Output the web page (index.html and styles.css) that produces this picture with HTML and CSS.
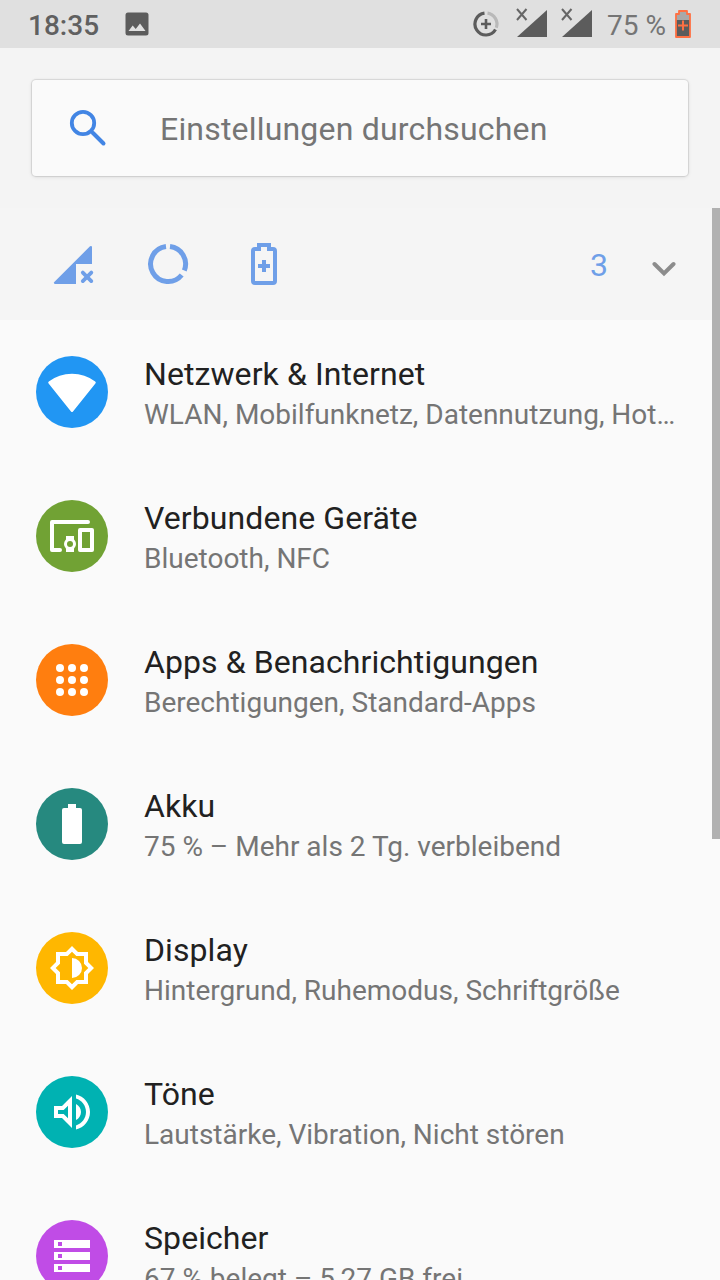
FILE: index.html
```html
<!DOCTYPE html>
<html lang="de">

<head>
    <meta charset="UTF-8">
    <meta name="viewport" content="width=device-width, initial-scale=1.0">
    <title>Einstellungen</title>
    <link rel="stylesheet" href="styles.css">
</head>

<body>

    <div class="status-bar">
        <span class="clock">18:35</span>
        <svg class="status-image" width="24" height="24" viewBox="0 0 24 24">
            <rect x="0.5" y="0.5" width="23" height="23" rx="2.5" fill="#5c5c5c"/>
            <path d="M3.5 19l4.2-5.5 3 3.6L15 11.500l5.500 7.500z" fill="#e0e0e0"/>
        </svg>
        <div class="status-icons">
            <svg width="28" height="28" viewBox="0 0 28 28" fill="none">
                <path d="M12.500 3.100A11 11 0 1 0 23.500 19.500" stroke="#5c5c5c" stroke-width="3.200"/>
                <path d="M15.500 3.100A11 11 0 0 1 24.300 17.700" stroke="#b9b9b9" stroke-width="3.200"/>
                <path d="M14 9v10M9 14h10" stroke="#5c5c5c" stroke-width="2.600"/>
            </svg>
            <svg class="sim" width="32" height="30" viewBox="0 0 32 30">
                <path d="M31 2v27H1z" fill="#5c5c5c"/>
                <path d="M1 1l9.500 11M10.500 1L1 12" stroke="#666" stroke-width="2"/>
            </svg>
            <svg class="sim" width="32" height="30" viewBox="0 0 32 30">
                <path d="M31 2v27H1z" fill="#5c5c5c"/>
                <path d="M1 1l9.500 11M10.500 1L1 12" stroke="#666" stroke-width="2"/>
            </svg>
            <span class="percent">75 %</span>
            <svg class="status-battery" width="16" height="28" viewBox="0 0 16 28">
                <path d="M1 4h3V1h8v3h3v23H1z" fill="#a8a8a8"/>
                <path d="M1 10h14v17H1z" fill="#5c5c5c"/>
                <path d="M1 4h3V1h8v3h3v23H1z" fill="none" stroke="#ff7043" stroke-width="1.800" stroke-linejoin="round"/>
                <path d="M8 10.500v10M3 15.500h10" stroke="#ff7043" stroke-width="2"/>
            </svg>
        </div>
    </div>

    <div class="search-area">
        <div class="search-box">
            <svg width="38" height="38" viewBox="0 0 38 38" fill="none" stroke="#4285e4">
                <circle cx="14" cy="14" r="11.200" stroke-width="3.800"/>
                <path d="M24 24l10.500 10.500" stroke-width="4" stroke-linecap="round"/>
                <path d="M22 22l3 3" stroke-width="3"/>
            </svg>
            <span class="search-text">Einstellungen durchsuchen</span>
        </div>
    </div>

    <div class="suggestions">
        <svg width="46" height="48" viewBox="0 0 46 48" fill="#6f9fe8">
            <path d="M5 44q-2-.5-.7-2L40 6.300q1.800-1 2 .7v17H26v20z"/>
            <path d="M32.800 32.600l8.500 8.500M41.300 32.600l-8.500 8.500" stroke="#6f9fe8" stroke-width="3.800" stroke-linecap="round"/>
        </svg>
        <svg width="48" height="48" viewBox="0 0 48 48" fill="none" stroke="#6f9fe8" stroke-width="5">
            <path d="M22 6.600A17.500 17.500 0 1 0 37.700 35"/>
            <path d="M26 6.600A17.500 17.500 0 0 1 40.300 30.500"/>
        </svg>
        <svg width="48" height="48" viewBox="0 0 48 48" fill="none" stroke="#6f9fe8" stroke-width="4">
            <path d="M19 9H15q-2 0-2 2V41q0 2 2 2H33q2 0 2-2V11q0-2-2-2H29V5H19z"/>
            <path d="M24 20v12M18 26h12"/>
        </svg>
        <span class="count">3</span>
        <svg class="chevron" width="24" height="16" viewBox="0 0 24 16">
            <path d="M2.500 3l9.500 9.500L21.500 3" fill="none" stroke="#8c8c8c" stroke-width="4" stroke-linecap="round"/>
        </svg>
    </div>

    <div class="list">
        <div class="item">
            <svg class="icon network" viewBox="0 0 72 72">
                <path d="M12.600 27.500q-1-1 .2-2Q23 17.700 36 17.700t23.200 7.800q1.200 1 .2 2L37 55.400q-1 1.200-2 0z"/>
            </svg>
            <div class="text">
                <div class="title">Netzwerk &amp; Internet</div>
                <div class="summary">WLAN, Mobilfunknetz, Datennutzung, Hot…</div>
            </div>
        </div>
        <div class="item">
            <svg class="icon devices" viewBox="0 0 72 72">
                <path d="M52 22H16v28h8" fill="none" stroke="#fff" stroke-width="4" stroke-linecap="round" stroke-linejoin="round"/>
                <rect x="44" y="30" width="12" height="20" fill="none" stroke="#fff" stroke-width="4" stroke-linejoin="round"/>
                <path d="M30 36h8v16h-8z"/>
                <circle cx="34" cy="44" r="6"/>
                <circle cx="34" cy="44" r="3" fill="#71a234"/>
            </svg>
            <div class="text">
                <div class="title">Verbundene Geräte</div>
                <div class="summary">Bluetooth, NFC</div>
            </div>
        </div>
        <div class="item">
            <svg class="icon apps" viewBox="0 0 72 72">
                <circle cx="24" cy="24" r="4"/>
                <circle cx="36" cy="24" r="4"/>
                <circle cx="48" cy="24" r="4"/>
                <circle cx="24" cy="36" r="4"/>
                <circle cx="36" cy="36" r="4"/>
                <circle cx="48" cy="36" r="4"/>
                <circle cx="24" cy="48" r="4"/>
                <circle cx="36" cy="48" r="4"/>
                <circle cx="48" cy="48" r="4"/>
            </svg>
            <div class="text">
                <div class="title">Apps &amp; Benachrichtigungen</div>
                <div class="summary">Berechtigungen, Standard-Apps</div>
            </div>
        </div>
        <div class="item">
            <svg class="icon battery" viewBox="0 0 72 72">
                <rect x="26" y="20" width="20" height="36" rx="2"/>
                <rect x="32" y="16" width="8" height="6"/>
            </svg>
            <div class="text">
                <div class="title">Akku</div>
                <div class="summary">75 % – Mehr als 2 Tg. verbleibend</div>
            </div>
        </div>
        <div class="item">
            <svg class="icon display" viewBox="0 0 72 72">
                <path fill-rule="evenodd" d="M36 14l6 6h10v10l6 6-6 6v10H42l-6 6-6-6H20V42l-6-6 6-6V20h10zM36 19.660L31.660 24H24v7.660L19.660 36 24 40.340V48h7.660L36 52.340 40.340 48H48v-7.660L52.340 36 48 31.660V24h-7.660z"/>
                <path d="M36 26a10 10 0 0 1 0 20z"/>
            </svg>
            <div class="text">
                <div class="title">Display</div>
                <div class="summary">Hintergrund, Ruhemodus, Schriftgröße</div>
            </div>
        </div>
        <div class="item">
            <svg class="icon sound" viewBox="-6 -6 36 36">
                <path fill-rule="evenodd" d="M3 9v6h4l5 5V4L7 9H3zm7-.17v6.340L7.830 13H5v-2h2.830L10 8.830zM16.500 12c0-1.770-1.020-3.290-2.500-4.030v8.050c1.480-.73 2.500-2.250 2.500-4.020zM14 3.230v2.060c2.890.86 5 3.540 5 6.710s-2.110 5.850-5 6.710v2.060c4.010-.91 7-4.490 7-8.770s-2.990-7.860-7-8.770z"/>
            </svg>
            <div class="text">
                <div class="title">Töne</div>
                <div class="summary">Lautstärke, Vibration, Nicht stören</div>
            </div>
        </div>
        <div class="item">
            <svg class="icon storage" viewBox="0 0 72 72">
                <path fill-rule="evenodd" d="M18 20h36v8H18zM22 22h4v4h-4zM18 32h36v8H18zM22 34h4v4h-4zM18 44h36v8H18zM22 46h4v4h-4z"/>
            </svg>
            <div class="text">
                <div class="title">Speicher</div>
                <div class="summary">67 % belegt – 5,27 GB frei</div>
            </div>
        </div>
    </div>

    <div class="scrollbar"></div>

</body>

</html>
```
FILE: styles.css
```css
* {
    box-sizing: border-box;
}

body {
    margin: 0;
    width: 720px;
    height: 1280px;
    overflow: hidden;
    position: relative;
    background-color: #fafafa;
    font-family: Roboto, "Noto Sans", sans-serif;
}

svg {
    display: block;
    flex-shrink: 0;
}

/* Status bar */
.status-bar {
    display: flex;
    align-items: center;
    height: 48px;
    padding: 0 29px 0 28px;
    background-color: #e0e0e0;
    color: #606060;
}

.clock {
    width: 97px;
    padding-top: 3px;
    font-size: 28px;
    font-weight: 500;
}

.status-icons {
    display: flex;
    align-items: center;
    margin-left: auto;
}

.sim {
    margin-left: 16px;
    margin-top: -2px;
}

.sim + .sim {
    margin-left: 13px;
}

.percent {
    width: 60px;
    margin-left: 14px;
    padding-top: 3px;
    font-size: 28px;
    color: #757575;
    white-space: nowrap;
}

.status-battery {
    margin-left: 8px;
}

/* Search */
.search-area {
    height: 160px;
    padding: 32px 32px 0;
    background-color: #f4f4f4;
}

.search-box {
    display: flex;
    align-items: center;
    height: 96px;
    padding-left: 37px;
    background-color: #fafafa;
    border-radius: 4px;
    box-shadow: 0 0 1px 1px rgba(0, 0, 0, 0.1), 0 1px 4px rgba(0, 0, 0, 0.1);
}

.search-text {
    margin-left: 53px;
    padding-top: 2px;
    font-size: 32px;
    letter-spacing: 0.19px;
    color: #757575;
}

/* Suggestions */
.suggestions {
    display: flex;
    align-items: center;
    gap: 48px;
    height: 112px;
    padding: 0 44px 0 50px;
    background-color: #f5f5f5;
}

.count {
    margin-left: auto;
    padding-top: 2px;
    font-size: 32px;
    color: #6f9fe8;
}

.chevron {
    margin-left: -4px;
    margin-top: 9px;
}

/* Settings list */
.item {
    display: flex;
    align-items: center;
    height: 144px;
    padding: 0 36px;
}

.icon {
    width: 72px;
    height: 72px;
    border-radius: 50%;
    fill: #fff;
}

.network {
    background-color: #2196f3;
}

.devices {
    background-color: #71a234;
}

.apps {
    background-color: #ff7e0f;
}

.battery {
    background-color: #26897f;
}

.display {
    background-color: #ffb700;
}

.sound {
    background-color: #00b2b2;
}

.storage {
    background-color: #c04ce6;
}

.text {
    width: 540px;
    margin-left: 36px;
    padding-top: 3px;
}

.title {
    font-size: 32px;
    line-height: 42px;
    letter-spacing: 0.08px;
    color: #212121;
}

.summary {
    font-size: 28px;
    line-height: 39px;
    color: #757575;
    white-space: nowrap;
}

.scrollbar {
    position: absolute;
    top: 208px;
    right: 0;
    width: 8px;
    height: 631px;
    background-color: #b1b1b1;
}
```
